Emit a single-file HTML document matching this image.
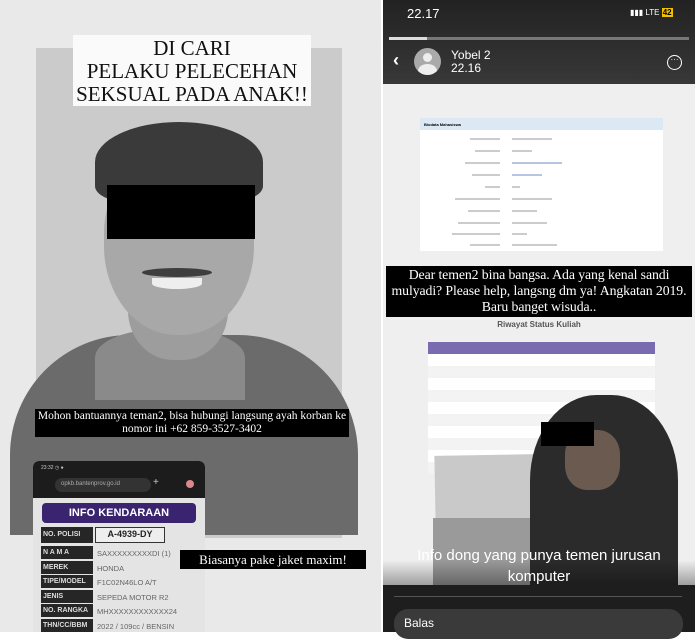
<!DOCTYPE html>
<html><head><meta charset="utf-8"><style>
*{margin:0;padding:0;box-sizing:border-box}
body{width:695px;height:632px;overflow:hidden;background:#fff;position:relative;font-family:"Liberation Sans",sans-serif}
.a{position:absolute}
.serif{font-family:"Liberation Serif",serif}
.row{position:absolute;left:8px;width:160px;height:14px;font-size:8px}
.row b{position:absolute;left:0;top:0;width:52px;height:13px;background:#262626;color:#ddd;font-size:7px;padding:3px 2px;font-weight:bold}
.row span{position:absolute;left:56px;top:3px;color:#666;font-size:7.5px}
.bl{position:absolute;height:2px;background:#ccc}
</style></head><body>
<div class="a" style="left:0;top:0;width:381px;height:632px;background:#e9e9e9"></div>
<div class="a" style="left:36px;top:48px;width:306px;height:490px;background:#cbcbcb"></div>
<div class="a" style="left:10px;top:335px;width:348px;height:200px;background:#6b6b6b;border-radius:120px 120px 0 0"></div>
<div class="a" style="left:95px;top:330px;width:150px;height:70px;background:#8a8a8a;border-radius:40% 40% 0 0"></div>
<div class="a" style="left:128px;top:250px;width:100px;height:110px;background:#9d9d9d;border-radius:0 0 45% 45%"></div>
<div class="a" style="left:104px;top:150px;width:150px;height:185px;background:#a8a8a8;border-radius:45% 45% 48% 48%"></div>
<div class="a" style="left:95px;top:122px;width:168px;height:80px;background:#3a3a3a;border-radius:50% 50% 20% 20%"></div>
<div class="a" style="left:142px;top:268px;width:70px;height:9px;background:#3e3e3e;border-radius:50%"></div>
<div class="a" style="left:152px;top:278px;width:50px;height:11px;background:#eee;border-radius:0 0 50% 50%"></div>
<div class="a" style="left:107px;top:185px;width:148px;height:54px;background:#000"></div>
<div class="a serif" style="left:73px;top:35px;width:238px;height:71px;background:#fafafa;text-align:center;font-size:21px;line-height:23px;color:#111;padding-top:2px;white-space:nowrap">DI CARI<br>PELAKU PELECEHAN<br>SEKSUAL PADA ANAK!!</div>
<div class="a serif" style="left:35px;top:409px;width:314px;height:28px;background:#000;color:#fff;font-size:11.5px;line-height:13px;text-align:center;padding-top:1px;white-space:nowrap">Mohon bantuannya teman2, bisa hubungi langsung ayah korban ke<br>nomor ini +62 859-3527-3402</div>
<div class="a" style="left:33px;top:461px;width:172px;height:171px;background:#e4e4e4;border-radius:6px 6px 0 0;overflow:hidden">
 <div class="a" style="left:0;top:0;width:172px;height:37px;background:#1c1c1c"></div>
 <div class="a" style="left:8px;top:4px;font-size:5px;color:#ccc">23:32 ◷ ●</div>
 <div class="a" style="left:22px;top:17px;width:96px;height:14px;background:#333;border-radius:7px;font-size:6px;color:#aaa;padding:3px 6px">opkb.bantenprov.go.id</div>
 <div class="a" style="left:120px;top:16px;font-size:10px;color:#ccc">+</div>
 <div class="a" style="left:153px;top:19px;width:8px;height:8px;border-radius:50%;background:#d88"></div>
 <div class="a" style="left:9px;top:42px;width:154px;height:20px;background:#3a2470;border-radius:4px;color:#fff;font-weight:bold;font-size:11px;text-align:center;line-height:20px">INFO KENDARAAN</div>
 <div class="row" style="top:66px;height:16px"><b style="height:16px;padding-top:4px">NO. POLISI</b><span style="left:54px;top:0;width:70px;height:16px;border:1.5px solid #333;background:#eee;color:#222;font-weight:bold;font-size:9px;text-align:center;line-height:13px">A-4939-DY</span></div>
 <div class="row" style="top:85px"><b>N A M A</b><span>SAXXXXXXXXXDI (1)</span></div>
 <div class="row" style="top:100px"><b>MEREK</b><span>HONDA</span></div>
 <div class="row" style="top:114px"><b>TIPE/MODEL</b><span>F1C02N46LO A/T</span></div>
 <div class="row" style="top:129px"><b>JENIS</b><span>SEPEDA MOTOR R2</span></div>
 <div class="row" style="top:143px"><b>NO. RANGKA</b><span>MHXXXXXXXXXXXX24</span></div>
 <div class="row" style="top:158px"><b>THN/CC/BBM</b><span>2022 / 109cc / BENSIN</span></div>
</div>
<div class="a serif" style="left:180px;top:550px;width:186px;height:19px;background:#000;color:#fff;font-size:13px;text-align:center;line-height:19px;white-space:nowrap">Biasanya pake jaket maxim!</div>
<div class="a" style="left:383px;top:0;width:312px;height:632px;background:#efefef"></div>
<div class="a" style="left:383px;top:0;width:312px;height:84px;background:linear-gradient(#222,#383838)"></div>
<div class="a" style="left:407px;top:6px;color:#fff;font-size:13px">22.17</div>
<div class="a" style="left:630px;top:8px;color:#fff;font-size:8px">▮▮▮ LTE <span style="background:#f0c000;color:#000;padding:0 1px;font-weight:bold">42</span></div>
<div class="a" style="left:389px;top:37px;width:300px;height:3px;background:#777"></div>
<div class="a" style="left:389px;top:37px;width:38px;height:3px;background:#ddd"></div>
<div class="a" style="left:393px;top:50px;color:#fff;font-size:18px;font-weight:bold">&lsaquo;</div>
<div class="a" style="left:414px;top:48px;width:27px;height:27px;border-radius:50%;background:#aaa;overflow:hidden"><div class="a" style="left:9px;top:5px;width:9px;height:9px;border-radius:50%;background:#eee"></div><div class="a" style="left:4px;top:16px;width:19px;height:14px;border-radius:50%;background:#eee"></div></div>
<div class="a" style="left:451px;top:49px;color:#fff;font-size:12px;line-height:13px">Yobel 2<br>22.16</div>
<div class="a" style="left:667px;top:55px;width:15px;height:15px;border:1.5px solid #fff;border-radius:50%;color:#fff;font-size:8px;line-height:8px;text-align:center">···</div>
<div class="a" style="left:420px;top:118px;width:243px;height:133px;background:#fff"></div>
<div class="a" style="left:420px;top:118px;width:243px;height:12px;background:#dce9f5;font-size:4px;font-weight:bold;padding:4px 4px">Biodata Mahasiswa</div>
<div class="bl" style="left:470px;top:138px;width:30px"></div><div class="bl" style="left:512px;top:138px;width:40px"></div>
<div class="bl" style="left:475px;top:150px;width:25px"></div><div class="bl" style="left:512px;top:150px;width:20px"></div>
<div class="bl" style="left:465px;top:162px;width:35px"></div><div class="bl" style="left:512px;top:162px;width:50px;background:#b8c4e0"></div>
<div class="bl" style="left:472px;top:174px;width:28px"></div><div class="bl" style="left:512px;top:174px;width:30px;background:#b8c4e0"></div>
<div class="bl" style="left:485px;top:186px;width:15px"></div><div class="bl" style="left:512px;top:186px;width:8px"></div>
<div class="bl" style="left:455px;top:198px;width:45px"></div><div class="bl" style="left:512px;top:198px;width:40px"></div>
<div class="bl" style="left:468px;top:210px;width:32px"></div><div class="bl" style="left:512px;top:210px;width:25px"></div>
<div class="bl" style="left:458px;top:222px;width:42px"></div><div class="bl" style="left:512px;top:222px;width:35px"></div>
<div class="bl" style="left:452px;top:233px;width:48px"></div><div class="bl" style="left:512px;top:233px;width:15px"></div>
<div class="bl" style="left:470px;top:244px;width:30px"></div><div class="bl" style="left:512px;top:244px;width:45px"></div>
<div class="a" style="left:386px;top:266px;width:306px;height:51px;background:#000"></div>
<div class="a serif" style="left:383px;top:267px;width:312px;color:#fff;font-size:13.8px;letter-spacing:-0.1px;line-height:16px;text-align:center;white-space:nowrap">Dear temen2 bina bangsa. Ada yang kenal sandi<br>mulyadi? Please help, langsng dm ya! Angkatan 2019.<br>Baru banget wisuda..</div>
<div class="a" style="left:383px;top:320px;width:312px;text-align:center;font-size:8px;font-weight:bold;color:#555">Riwayat Status Kuliah</div>
<div class="a" style="left:428px;top:342px;width:227px;height:12px;background:#7a6bb0"></div>
<div class="a" style="left:428px;top:354px;width:227px;height:120px;background:repeating-linear-gradient(#fff 0 12px,#f3f3f3 12px 24px)"></div>
<div class="a" style="left:435px;top:455px;width:100px;height:70px;background:#c9c9c9;transform:rotate(-1deg)"></div>
<div class="a" style="left:433px;top:518px;width:105px;height:68px;background:#9a9a9a"></div>
<div class="a" style="left:530px;top:395px;width:148px;height:190px;background:#2b2b2b;border-radius:45% 45% 0 0"></div>
<div class="a" style="left:565px;top:430px;width:55px;height:60px;background:#6a5a50;border-radius:40%"></div>
<div class="a" style="left:541px;top:422px;width:53px;height:24px;background:#000"></div>
<div class="a" style="left:383px;top:560px;width:312px;height:30px;background:linear-gradient(rgba(0,0,0,0),rgba(0,0,0,.4))"></div>
<div class="a" style="left:383px;top:545px;width:312px;color:#fff;font-size:15px;line-height:21px;text-align:center">Info dong yang punya temen jurusan<br>komputer</div>
<div class="a" style="left:383px;top:585px;width:312px;height:47px;background:#1e1e1e"></div>
<div class="a" style="left:394px;top:596px;width:288px;height:1px;background:#555"></div>
<div class="a" style="left:394px;top:609px;width:289px;height:30px;background:#3a3a3a;border-radius:14px;color:#fff;font-size:12px;padding:7px 10px">Balas</div>
</body></html>
